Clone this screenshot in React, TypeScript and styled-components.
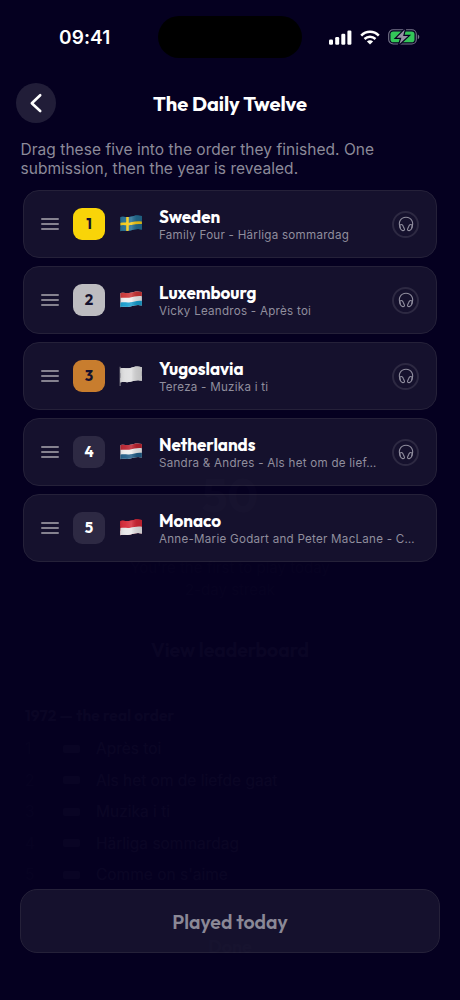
import React from "react";
import styled, { createGlobalStyle } from "styled-components";

const Global = createGlobalStyle`
  * { box-sizing: border-box; }
  body { margin: 0; background: #050020; }
`;

const display = `"Outfit", "Lato", sans-serif`;
const body = `"Inter", sans-serif`;

const Screen = styled.main`
  position: relative;
  width: 460px;
  height: 1000px;
  overflow: hidden;
  display: flex;
  flex-direction: column;
  background: #050020;
  color: #fff;
  font-family: ${body};
`;

const StatusBar = styled.div`
  height: 75px;
  padding: 16px 40px 17px 59px;
  display: grid;
  grid-template-columns: 99px 144px 1fr;
  align-items: center;
`;

const Clock = styled.span`
  padding-top: 2px;
  font-size: 19px;
  font-weight: 600;
  letter-spacing: 0.1px;
  line-height: 22px;
`;

const Island = styled.div`
  height: 42px;
  border-radius: 21px;
  background: #000;
`;

const StatusIcons = styled.div`
  display: flex;
  justify-content: flex-end;
  align-items: center;
  gap: 8px;
`;

const Header = styled.header`
  height: 56px;
  padding: 0 16px;
  display: grid;
  grid-template-columns: 40px 1fr 40px;
  align-items: center;
`;

const BackButton = styled.button`
  width: 40px;
  height: 40px;
  padding: 0;
  border: 0;
  border-radius: 50%;
  background: #211d38;
  display: grid;
  place-items: center;
`;

const Title = styled.h1`
  margin: 0;
  padding-top: 1px;
  text-align: center;
  font: 700 20px/26px ${display};
  letter-spacing: -0.05px;
  white-space: nowrap;
`;

const Intro = styled.p`
  margin: 9px 20px 12px 20.5px;
  height: 38px;
  color: #8c8a99;
  font-size: 15.5px;
  line-height: 19.3px;
  letter-spacing: 0.04px;
  white-space: nowrap;
`;

const List = styled.div`
  padding: 0 23px;
  display: flex;
  flex-direction: column;
  gap: 8px;
`;

const Card = styled.article`
  height: 68px;
  padding: 0 17px;
  display: flex;
  align-items: center;
  border: 1px solid #252139;
  border-radius: 16px;
  background: #15112d;
`;

const Handle = styled.svg`
  flex: none;
  margin-right: 14px;
`;

const Rank = styled.span<{ $bg: string; $fg: string }>`
  flex: none;
  width: 32px;
  height: 32px;
  margin-right: 14px;
  display: grid;
  place-items: center;
  border-radius: 9px;
  background: ${(p) => p.$bg};
  color: ${(p) => p.$fg};
  font: 700 15px/20px ${display};
`;

const FlagBox = styled.svg`
  flex: none;
  margin: 0 15.5px 2px 0;
`;

const Entry = styled.div`
  flex: 1;
  min-width: 0;
  padding-top: 1px;
`;

const Country = styled.div`
  font: 700 17px/20px ${display};
  letter-spacing: -0.05px;
`;

const Song = styled.div`
  margin-top: 1px;
  height: 15px;
  white-space: nowrap;
  color: #908e9d;
  font-size: 11.6px;
  line-height: 15px;
  letter-spacing: 0.26px;
`;

const Listen = styled.span`
  flex: none;
  width: 27px;
  height: 27px;
  margin-left: 12px;
  display: grid;
  place-items: center;
  border: 2px solid #2d2942;
  border-radius: 50%;
`;

const Footer = styled.footer`
  margin-top: auto;
  padding: 0 20px 47px;
`;

const Played = styled.button`
  width: 100%;
  height: 64px;
  padding: 1px 0 0;
  border: 1px solid #252139;
  border-radius: 17px;
  background: #15112d;
  color: #8a8896;
  font: 600 19.5px/24px ${display};
`;

/* The result sheet while it is almost fully faded out. */
const Sheet = styled.div`
  position: absolute;
  inset: 0;
  padding: 474px 25px 0;
  opacity: 0.02;
  pointer-events: none;
  white-space: nowrap;
`;

const Score = styled.div`
  height: 83px;
  text-align: center;
  font: 700 46px/42px ${display};
  opacity: 0.45;
`;

const Note = styled.div`
  height: 22px;
  text-align: center;
  font-size: 15px;
  line-height: 22px;
  opacity: 0.4;
`;

const BoardLink = styled.div`
  height: 69px;
  margin-top: 32px;
  text-align: center;
  font: 600 19.5px/34px ${display};
`;

const Heading = styled.div`
  height: 31px;
  font: 600 15.5px/27px ${display};
  letter-spacing: 0.15px;
`;

const Result = styled.div`
  height: 31.5px;
  display: grid;
  grid-template-columns: 38px 33px 1fr;
  align-items: center;
  font-size: 15.5px;
`;

const Place = styled.span`
  opacity: 0.4;
`;

const ResultFlag = styled.i`
  width: 17px;
  height: 8px;
  border-radius: 2px;
  background: #fff;
  opacity: 0.8;
`;

const Done = styled.div`
  margin-top: 42px;
  text-align: center;
  font: 600 18px/28px ${display};
  opacity: 0.5;
`;

type FlagKind = "sweden" | "luxembourg" | "white" | "netherlands" | "monaco";

const stripes: Record<FlagKind, string[]> = {
  sweden: ["#236c91", "#236c91", "#236c91"],
  luxembourg: ["#cb3436", "#eeeeef", "#169dce"],
  white: ["#dededf", "#dededf", "#dededf"],
  netherlands: ["#bb222f", "#eeeeef", "#215d88"],
  monaco: ["#d52736", "#d52736", "#e8e8e9"],
};

function Flag({ kind }: { kind: FlagKind }) {
  const [a, b, c] = stripes[kind];
  const id = `wave-${kind}`;
  const tall = kind === "white";
  return (
    <FlagBox width="24.5" height="24" viewBox="0 0 26 24" preserveAspectRatio="none">
      <defs>
        <clipPath id={id}>
          <path d="M1.500 5.500C5 4.200 8 6 12 5S19 2.900 24.300 4.200V17.700C19 16.300 16 17.800 12 18.800S5 18.400 1.500 19.500Z" />
        </clipPath>
        <linearGradient id={`${id}-shade`}>
          <stop offset="0" stopColor="#000" stopOpacity=".12" />
          <stop offset=".25" stopColor="#fff" stopOpacity=".05" />
          <stop offset=".5" stopColor="#fff" stopOpacity=".16" />
          <stop offset=".72" stopColor="#000" stopOpacity=".1" />
          <stop offset="1" stopColor="#000" stopOpacity=".16" />
        </linearGradient>
      </defs>
      {tall && <path d="M1.200 3.700V23" stroke="#77747f" strokeWidth="1.200" />}
      <g transform={tall ? undefined : "translate(0 .8)"}>
        <g clipPath={`url(#${id})`}>
          <path d="M0 0H26V24H0Z" fill={b} />
          <path d="M0 0H26V8.700C20 7.400 16 9 12 9.800S5 9 0 10.500Z" fill={a} />
          <path d="M0 15.200C5 13.700 8 15.200 12 14.500S20 12 26 13.300V24H0Z" fill={c} />
          {kind === "monaco" && <path d="M0 0H26V11.200C20 10 16 11 12 12S5 11.200 0 12.700Z" fill={a} />}
          {kind === "monaco" && <path d="M0 12.700C5 11.200 8 12.800 12 12S20 10 26 11.200V24H0Z" fill={c} />}
          {kind === "sweden" && (
            <path d="M9 2V22M0 12.500C5 11 8 12.900 12 12S20 10 26 11.200" fill="none" stroke="#f6ca17" strokeWidth="2.700" />
          )}
          <path d="M0 0H26V24H0Z" fill={`url(#${id}-shade)`} />
        </g>
      </g>
    </FlagBox>
  );
}

function Headphones() {
  return (
    <svg width="16" height="16" viewBox="0 0 16 16" fill="none" stroke="#908e9e" strokeWidth="1.1" strokeLinecap="round" strokeLinejoin="round">
      <path d="M2.400 12.200C-.4 6.200 2.700 1.200 8 1.200s8.400 5 5.600 11" />
      <path d="M2 8.900C3.700 7.800 4.700 9 5.300 10.500L6.400 13c.5 1.200-.8 2-2 1.500C2.900 13.800 1.600 11.300 2 8.900Z" />
      <path d="M14 8.900C12.300 7.800 11.300 9 10.700 10.500L9.600 13c-.5 1.200.8 2 2 1.500 1.500-.7 2.800-3.200 2.400-5.600Z" />
    </svg>
  );
}

const entries: { country: string; song: string; flag: FlagKind; bg: string; fg: string; listen: boolean }[] = [
  { country: "Sweden", song: "Family Four - Härliga sommardag", flag: "sweden", bg: "#f9d408", fg: "#15112d", listen: true },
  { country: "Luxembourg", song: "Vicky Leandros - Après toi", flag: "luxembourg", bg: "#bdbcc0", fg: "#15112d", listen: true },
  { country: "Yugoslavia", song: "Tereza - Muzika i ti", flag: "white", bg: "#c87d2e", fg: "#15112d", listen: true },
  { country: "Netherlands", song: "Sandra & Andres - Als het om de lief…", flag: "netherlands", bg: "#2d2943", fg: "#fff", listen: true },
  { country: "Monaco", song: "Anne-Marie Godart and Peter MacLane - C…", flag: "monaco", bg: "#2d2943", fg: "#fff", listen: false },
];

const results = ["Après toi", "Als het om de liefde gaat", "Muzika i ti", "Härliga sommardag", "Comme on s'aime"];

export default function App() {
  return (
    <>
      <Global />
      <Screen>
        <StatusBar>
          <Clock>09:41</Clock>
          <Island />
          <StatusIcons>
            <svg width="23" height="15" viewBox="0 0 23 15" fill="#fff">
              <rect x="0" y="9.500" width="4" height="5.200" rx="1.200" />
              <rect x="6.200" y="7" width="4" height="7.700" rx="1.200" />
              <rect x="12.300" y="3.800" width="4" height="10.900" rx="1.200" />
              <rect x="18.400" y=".5" width="4" height="14.200" rx="1.200" />
            </svg>
            <svg width="20" height="15" viewBox="0 0 20 15" fill="none" stroke="#fff" strokeWidth="2.500">
              <path d="M1.200 5.600C6.200.5 13.800.5 18.800 5.600" />
              <path d="M4.500 9C7.700 5.900 12.300 5.900 15.500 9" />
              <path d="M10 14.500 6.900 11.400C8.700 9.800 11.300 9.800 13.100 11.400Z" fill="#fff" stroke="none" />
            </svg>
            <svg width="32" height="16" viewBox="0 0 32 16">
              <rect x=".7" y=".7" width="27.600" height="14.300" rx="4.500" fill="none" stroke="#77748a" strokeWidth="1.100" />
              <rect x="2.500" y="2.500" width="24" height="10.700" rx="2.800" fill="#34c759" />
              <path d="M29.800 5.500c2 .8 2 3.900 0 4.700Z" fill="#77748a" />
              <path d="M16.800.6 8.600 8.800h4.800l-2 6.200 8.700-8.100h-5Z" fill="#9692a3" stroke="#050020" strokeWidth="2.400" paintOrder="stroke" />
            </svg>
          </StatusIcons>
        </StatusBar>
        <Header>
          <BackButton aria-label="Back">
            <svg width="20" height="20" viewBox="0 0 20 20" fill="none" stroke="#fff" strokeWidth="2.600" strokeLinecap="round" strokeLinejoin="round">
              <path d="M14.200 2.200 5.800 10.200l8.400 7.800" />
            </svg>
          </BackButton>
          <Title>The Daily Twelve</Title>
        </Header>
        <Intro>
          Drag these five into the order they finished. One
          <br />
          submission, then the year is revealed.
        </Intro>
        <List>
          {entries.map((e, i) => (
            <Card key={e.country}>
              <Handle width="18" height="14" viewBox="0 0 18 14" stroke="#85828f" strokeWidth="2" strokeLinecap="round">
                <path d="M1 2h16M1 7h16M1 12h16" />
              </Handle>
              <Rank $bg={e.bg} $fg={e.fg}>{i + 1}</Rank>
              <Flag kind={e.flag} />
              <Entry>
                <Country>{e.country}</Country>
                <Song>{e.song}</Song>
              </Entry>
              {e.listen && (
                <Listen>
                  <Headphones />
                </Listen>
              )}
            </Card>
          ))}
        </List>
        <Footer>
          <Played>Played today</Played>
        </Footer>
        <Sheet aria-hidden="true">
          <Score>50</Score>
          <Note>You're the first to play today</Note>
          <Note>2-day streak</Note>
          <BoardLink>View leaderboard</BoardLink>
          <Heading>1972 — the real order</Heading>
          {results.map((song, i) => (
            <Result key={song}>
              <Place>{i + 1}</Place>
              <ResultFlag />
              <span>{song}</span>
            </Result>
          ))}
          <Done>Done</Done>
        </Sheet>
      </Screen>
    </>
  );
}
